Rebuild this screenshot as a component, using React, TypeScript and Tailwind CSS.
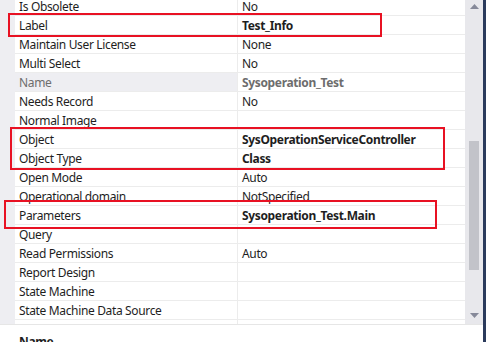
import React from "react";

type Row = { name: string; value?: string; bold?: boolean; readonly?: boolean };

const rows: Row[] = [
  { name: "Is Obsolete", value: "No" },
  { name: "Label", value: "Test_Info", bold: true },
  { name: "Maintain User License", value: "None" },
  { name: "Multi Select", value: "No" },
  { name: "Name", value: "Sysoperation_Test", bold: true, readonly: true },
  { name: "Needs Record", value: "No" },
  { name: "Normal Image" },
  { name: "Object", value: "SysOperationServiceController", bold: true },
  { name: "Object Type", value: "Class", bold: true },
  { name: "Open Mode", value: "Auto" },
  { name: "Operational domain", value: "NotSpecified" },
  { name: "Parameters", value: "Sysoperation_Test.Main", bold: true },
  { name: "Query" },
  { name: "Read Permissions", value: "Auto" },
  { name: "Report Design" },
  { name: "State Machine" },
  { name: "State Machine Data Source" },
  { name: "State Machine Transition Type" },
];

export default function App() {
  return (
    <div
      className="relative w-[486px] h-[342px] overflow-hidden bg-white flex text-[12px] tracking-[-0.35px] text-[#1e1e1e]"
      style={{ fontFamily: '"Noto Sans", "Open Sans", sans-serif' }}
    >
      <div className="flex-1 flex flex-col">
        <div className="h-[325px] shrink-0 flex border-b border-[#e6e6e6]">
          <div className="w-[15px] bg-[#eeeef2]" />
          <div className="flex-1 overflow-hidden">
            <div className="mt-[-3px]">
              {rows.map((r) => (
                <div key={r.name} className="flex h-[19px] border-b border-[#ececec]">
                  <div
                    className={`w-[223px] pl-[4px] pt-[1px] leading-[17px] whitespace-nowrap border-r border-[#ececec] ${
                      r.readonly ? "bg-[#eeeef2] text-[#6d6d6d]" : ""
                    }`}
                  >
                    {r.name}
                  </div>
                  <div
                    className={`flex-1 pl-[4px] pt-[1px] leading-[17px] whitespace-nowrap ${
                      r.bold ? "font-bold" : ""
                    } ${r.readonly ? "text-[#6d6d6d]" : ""}`}
                  >
                    {r.value ?? ""}
                  </div>
                </div>
              ))}
            </div>
          </div>
          <div className="w-[18px] bg-[#e8e8ec] flex flex-col items-center">
            <svg width="9" height="6" viewBox="0 0 9 6" className="mt-[4px]">
              <polygon points="4.5,0 9,5 0,5" fill="#868999" />
            </svg>
            <div className="mt-[131px] w-[10px] h-[129px] bg-[#c2c3c9]" />
            <svg width="9" height="6" viewBox="0 0 9 6" className="mt-[43px]">
              <polygon points="0,0 9,0 4.5,5" fill="#868999" />
            </svg>
          </div>
        </div>
        <div className="pl-[19px] pt-[9px] font-bold leading-[16px]">Name</div>
      </div>
      <div className="w-[3px] bg-[#2b3b5c]" />

      <div className="absolute left-[8px] top-[13px] w-[374px] h-[24px] border-2 border-[#e81123]" />
      <div className="absolute left-[10px] top-[127px] w-[435px] h-[43px] border-2 border-[#e81123]" />
      <div className="absolute left-[4px] top-[200px] w-[433px] h-[29px] border-2 border-[#e81123]" />
    </div>
  );
}
